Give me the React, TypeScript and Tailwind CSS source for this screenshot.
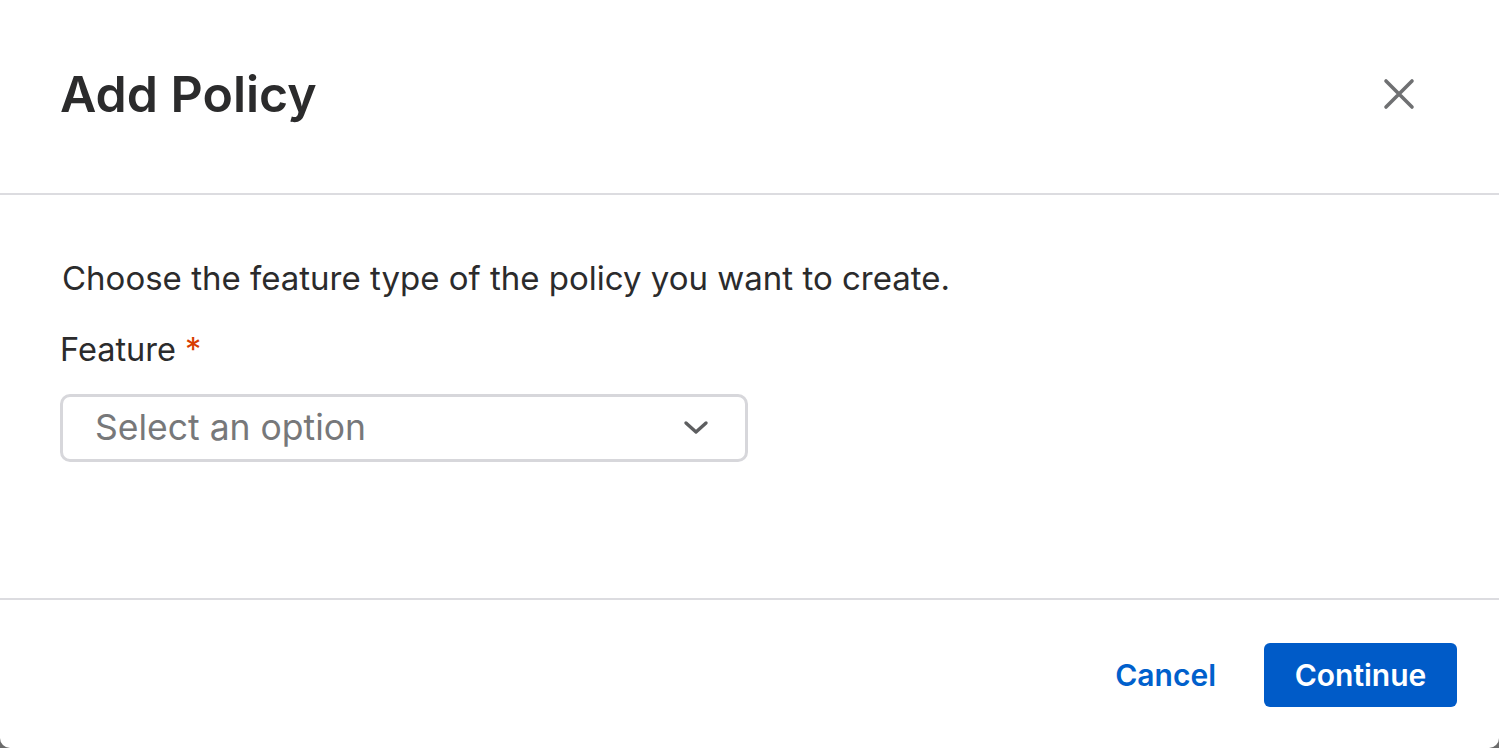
import React, { useState } from 'react';

const fontStack = { fontFamily: 'Inter, "Noto Sans", sans-serif' };

const CloseIcon = () => (
  <svg width="34" height="34" viewBox="0 0 34 34" fill="none">
    <path d="M4 4L30 30M30 4L4 30" stroke="#6f7072" strokeWidth="3.6" strokeLinecap="round" />
  </svg>
);

const ChevronDown = () => (
  <svg width="26" height="16" viewBox="0 0 26 16" fill="none">
    <path d="M3 3L13 12L23 3" stroke="#5d5e60" strokeWidth="3.4" strokeLinecap="round" strokeLinejoin="round" />
  </svg>
);

export default function App() {
  const [feature, setFeature] = useState('');

  return (
    <div className="h-screen w-full bg-[#6b6b6b]" style={fontStack}>
      <div className="flex h-full w-full flex-col rounded-b-[10px] bg-white text-[#2b2b2c]">
        {/* header */}
        <div className="flex h-[195px] shrink-0 items-center justify-between border-b-2 border-[#dcdce0] pb-[6px] pl-[60px] pr-[80px]">
          <h1 className="text-[50px] font-semibold leading-none">Add Policy</h1>
          <button className="flex h-10 w-10 items-center justify-center" aria-label="Close">
            <CloseIcon />
          </button>
        </div>

        {/* body */}
        <div className="flex-1 px-[60px] pt-[63px]">
          <p className="pl-[2px] text-[33px] leading-[40px]">Choose the feature type of the policy you want to create.</p>
          <label className="mt-[32px] block text-[32.5px] leading-[40px]">
            Feature <span className="text-[#d83b01]">*</span>
          </label>
          <button
            onClick={() => setFeature(feature)}
            className="mt-[24px] flex h-[68px] w-[688px] items-center justify-between rounded-[10px] border-[3px] border-[#d7d7db] pl-[32px] pr-[36px]"
          >
            <span className="text-[35.5px] leading-none text-[#77787a]">{feature || 'Select an option'}</span>
            <ChevronDown />
          </button>
        </div>

        {/* footer */}
        <div className="flex h-[150px] shrink-0 items-center justify-end gap-[48px] border-t-2 border-[#dcdce0] pt-[2px] pr-[42px]">
          <button className="text-[30px] font-semibold text-[#0060cc]">Cancel</button>
          <button className="flex h-[64px] w-[193px] items-center justify-center rounded-[6px] bg-[#005bc8] text-[30px] font-semibold text-white">
            Continue
          </button>
        </div>
      </div>
    </div>
  );
}
